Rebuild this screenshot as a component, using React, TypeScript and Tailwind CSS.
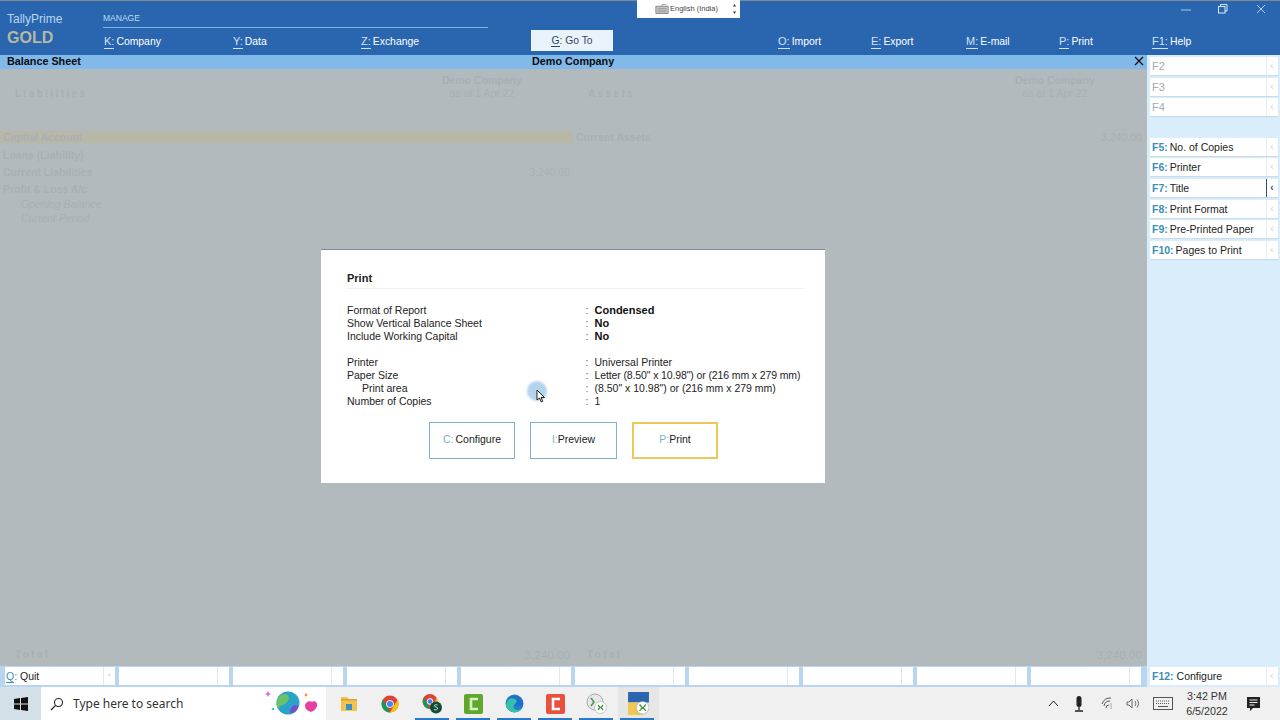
const F = "font-['Liberation_Sans',Arial,sans-serif]";

function Top({ k, t, w }: { k: string; t: string; w: string }) {
  return (
    <div className={`${w} shrink-0 pt-[6px] text-[10.4px] text-white leading-[14px]`}>
      <span className="text-[11px] text-[#cfe4f7] border-b border-[#cfe4f7] pb-[1px]">{k}:</span>
      <span className="ml-[2px]">{t}</span>
    </div>
  );
}

function Side({ k, t, active, dim }: { k: string; t?: string; active?: boolean; dim?: boolean }) {
  return (
    <div className="flex h-[18px] w-[128px] ml-[2.5px] bg-white shadow-[0_1px_1px_#c7dcec] mb-[2.6px]">
      <div className="flex-1 pl-[2.5px] text-[10.5px] leading-[18px] whitespace-nowrap">
        <span className={dim ? "text-[#a9a9a9] text-[11px]" : "text-[#3d8fb5] font-bold"}>{k}{t ? ":" : ""}</span>
        {t && <span className="ml-[2px] text-[#222]">{t}</span>}
      </div>
      <div className={`w-[12px] border-l text-center text-[10px] leading-[18px] ${active ? "border-[#2b4f78] text-[#2b4f78] font-bold" : "border-[#e8eef2] text-[#cfcfcf]"}`}>‹</div>
    </div>
  );
}

function BottomSlot({ label }: { label?: boolean }) {
  return (
    <div className="w-[110px] h-[18px] flex bg-white shrink-0">
      <div className="flex-1 pl-[1px] text-[10.5px] leading-[18px] text-[#222]">
        {label && <><span className="text-[#3d8fb5] border-b border-[#3d8fb5]">Q</span><span className="text-[#3d8fb5]">:</span> Quit</>}
      </div>
      <div className="w-[12px] border-l border-[#e4e8ea] text-[7px] leading-[18px] text-center text-[#bbb]">{label ? "^" : ""}</div>
    </div>
  );
}

function Row({ a, amt, it }: { a: string; amt?: string; it?: boolean }) {
  return (
    <div className={`flex justify-between ${it ? "h-[14px] pl-[21px] italic font-normal text-[10.5px]" : "h-[17.2px] pl-[3px] font-bold text-[10.5px]"} text-[#a9b0b3] pr-[3px] leading-[15px]`}>
      <span>{a}</span>
      {amt && <span className="font-normal text-[10.5px]">{amt}</span>}
    </div>
  );
}

function Line({ l, v, b, ind, tight }: { l: string; v: string; b?: boolean; ind?: boolean; tight?: boolean }) {
  return (
    <div className="flex leading-[13px] text-[10.5px] text-[#222] whitespace-nowrap">
      <div className={`w-[238.5px] shrink-0 ${ind ? "pl-[15px]" : ""}`}>{l}</div>
      <div className="w-[9px] shrink-0 text-[#666]">:</div>
      <div className={`${b ? "font-bold text-[#111] text-[11px]" : ""} ${tight ? "tracking-[-0.12px]" : ""}`}>{v}</div>
    </div>
  );
}

function Btn({ k, t, w, gold, gap }: { k: string; t: string; w: string; gold?: boolean; gap?: boolean }) {
  return (
    <div className={`${w} h-[37px] flex items-center justify-center text-[10.5px] text-[#222] border ${gold ? "border-[#eec75b] border-2" : "border-[#7db3cc]"}`}>
      <span className="text-[#7fb0c8]">{k}:</span><span className={gap ? "ml-[2px]" : ""}>{t}</span>
    </div>
  );
}

function Slot({ children, hi }: { children: React.ReactNode; hi?: boolean }) {
  return <div className={`w-[41.3px] h-full shrink-0 flex justify-center items-center ${hi ? "bg-[#e6e6e6]" : ""}`}>{children}</div>;
}

export default function App() {
  return (
    <div className={`${F} w-[1280px] h-[720px] overflow-hidden flex flex-col bg-[#f0f0f0]`}>
      {/* Title + menu */}
      <div className="h-[55px] shrink-0 bg-[#2a66b0] border-t border-[#7f8a93] relative flex">
        <div className="w-[103px] shrink-0 pl-[7px] pt-[11px]">
          <div className="text-[12px] leading-[14px] text-[#b9d6ef]">TallyPrime</div>
          <div className="text-[16px] leading-[18px] mt-[3px] font-bold text-[#b5b9a0]">GOLD</div>
        </div>
        <div className="flex-1 flex flex-col">
          <div className="w-[385px] h-[27px] border-b border-[#7fb5e6] pt-[11px] text-[8.5px] leading-[12px] text-[#bfdcf5]">MANAGE</div>
          <div className="flex items-start pl-[1px]">
            <Top k="K" t="Company" w="w-[129px]" />
            <Top k="Y" t="Data" w="w-[128px]" />
            <Top k="Z" t="Exchange" w="w-[170px]" />
            <div className="w-[82px] h-[21px] mt-[2px] bg-[#e9f3fb] text-[#33475b] text-center text-[10.3px] leading-[21px] shrink-0">
              <span className="border-b border-[#33475b]">G</span>: Go To
            </div>
            <div className="w-[165px] shrink-0" />
            <Top k="O" t="Import" w="w-[93px]" />
            <Top k="E" t="Export" w="w-[95px]" />
            <Top k="M" t="E-mail" w="w-[93px]" />
            <Top k="P" t="Print" w="w-[93px]" />
            <Top k="F1" t="Help" w="w-[60px]" />
          </div>
        </div>
        {/* Language bar */}
        <div className="absolute left-[637px] -top-[1px] w-[103px] h-[18px] bg-white flex items-center text-[7.5px] text-[#444]">
          <svg width="14" height="10" viewBox="0 0 12 9" className="ml-[18px] mr-[1px]"><rect x="0.5" y="2" width="11" height="6.5" fill="#c9c9c9" stroke="#777" strokeWidth="0.7" /><path d="M2 4h8M2 5.5h8M2 7h8" stroke="#888" strokeWidth="0.6" /><path d="M6 2V0.5h4" stroke="#777" fill="none" strokeWidth="0.6" /></svg>
          <span className="w-[62px] whitespace-nowrap">English (India)</span>
          <svg width="5" height="12" viewBox="0 0 5 12"><path d="M2.5 1 4 3.5H1zM2.5 11 4 8.5H1z" fill="#333" /></svg>
        </div>
        {/* Window controls */}
        <svg className="absolute left-[1181px] top-[8px]" width="11" height="2"><path d="M0 1h10" stroke="#a8c8e8" strokeWidth="1" /></svg>
        <svg className="absolute left-[1218px] top-[3px]" width="10" height="10" viewBox="0 0 10 10" fill="none" stroke="#d8e8f5"><rect x="0.5" y="2.5" width="6.5" height="6.5" /><path d="M2.5 2.5V0.5H9V7H7" /></svg>
        <svg className="absolute left-[1256px] top-[3px]" width="10" height="10" viewBox="0 0 10 10" stroke="#b5d0ea"><path d="M1 1l8 8M9 1l-8 8" /></svg>
      </div>

      {/* Body */}
      <div className="flex-1 flex min-h-0">
        <div className="w-[1147px] shrink-0 flex flex-col">
          <div className="h-[13.5px] shrink-0 bg-[#80b9ea] flex justify-between relative text-[10.8px] font-bold text-[#0c0c0c] leading-[12px] pl-[7px]">
            <span>Balance Sheet</span>
            <span className="absolute left-[532px] top-0">Demo Company</span>
            <svg className="absolute left-[1134px] top-[1px]" width="10" height="10" viewBox="0 0 10 10" stroke="#111" strokeWidth="1.3"><path d="M1 1l8 8M9 1l-8 8" /></svg>
          </div>
          <div className="flex-1 bg-[#b2babd] relative flex flex-col">
            <div className="flex flex-1 min-h-0">
              <div className="w-[573px] shrink-0 flex flex-col">
                <div className="h-[62px] flex justify-between">
                  <div className="pl-[15px] pt-[18px] text-[10px] leading-[14px] font-bold tracking-[2.4px] text-[#a9b0b3]">Liabilities</div>
                  <div className="pt-[5px] w-[100px] text-center text-[10.5px] leading-[13px] text-[#a9b0b3] mr-[41px]"><div className="font-bold">Demo Company</div><div>as at 1 Apr 22</div></div>
                </div>
                <div className="h-[12.5px] bg-[#b7b9a6] text-[#a9b0b3] text-[10.5px] font-bold pl-[3px] leading-[13px]">Capital Account</div>
                <div className="h-[4.5px]" />
                <Row a="Loans (Liability)" />
                <Row a="Current Liabilities" amt="3,240.00" />
                <Row a="Profit & Loss A/c" />
                <div className="-mt-[2px]">
                  <Row a="Opening Balance" it />
                  <Row a="Current Period" it />
                </div>
              </div>
              <div className="flex-1 flex flex-col">
                <div className="h-[62px] flex justify-between">
                  <div className="pl-[15px] pt-[18px] text-[10px] leading-[14px] font-bold tracking-[2.4px] text-[#a9b0b3]">Assets</div>
                  <div className="pt-[5px] w-[100px] text-center text-[10.5px] leading-[13px] text-[#a9b0b3] mr-[42px]"><div className="font-bold">Demo Company</div><div>as at 1 Apr 22</div></div>
                </div>
                <div className="flex justify-between pl-[3px] pr-[5px] text-[10.5px] font-bold text-[#a9b0b3] leading-[13px]"><span>Current Assets</span><span className="font-normal">3,240.00</span></div>
              </div>
            </div>
            <div className="h-[19px] pt-[1px] flex shrink-0 text-[#a9b0b3]">
              <div className="w-[573px] flex justify-between pl-[15px] pr-[3px] text-[10px] font-bold leading-[14px]"><span className="tracking-[2.4px]">Total</span><span className="font-normal text-[11.7px]">3,240.00</span></div>
              <div className="flex-1 flex justify-between pl-[14px] pr-[5px] text-[10px] font-bold leading-[14px]"><span className="tracking-[2.4px]">Total</span><span className="font-normal text-[11.7px]">3,240.00</span></div>
            </div>

            {/* Dialog */}
            <div className="absolute left-[321px] top-[180px] w-[504px] h-[234px] bg-white border-t border-[#7f8a93] pl-[26px] pr-[21px] pt-[21px]">
              <div className="text-[11px] leading-[14px] font-bold text-[#222] h-[18px] border-b border-[#f0f0f0]">Print</div>
              <div className="mt-[15px]">
                <Line l="Format of Report" v="Condensed" b />
                <Line l="Show Vertical Balance Sheet" v="No" b />
                <Line l="Include Working Capital" v="No" b />
                <div className="h-[13px]" />
                <Line l="Printer" v="Universal Printer" />
                <Line l="Paper Size" v={'Letter (8.50" x 10.98") or (216 mm x 279 mm)'} tight />
                <Line l="Print area" v={'(8.50" x 10.98") or (216 mm x 279 mm)'} ind />
                <Line l="Number of Copies" v="1" />
              </div>
              <div className="flex ml-[82px] mt-[14px]">
                <Btn k="C" t="Configure" w="w-[86px]" gap />
                <div className="w-[15px]" />
                <Btn k="I" t="Preview" w="w-[87px]" />
                <div className="w-[15px]" />
                <Btn k="P" t="Print" w="w-[86px]" gold />
              </div>
              {/* Cursor */}
              <div className="absolute left-[206px] top-[131px] w-[20px] h-[20px] rounded-full bg-[#b4d3ec] blur-[1px]" />
              <svg className="absolute left-[215px] top-[139px]" width="10" height="14" viewBox="0 0 10 14"><path d="M1 1v10l2.5-2 1.8 4 1.5-.7-1.8-3.8H8.5z" fill="#fff" stroke="#222" strokeWidth="1" /></svg>
            </div>
          </div>
        </div>
        {/* Right sidebar */}
        <div className="flex-1 bg-[#d9edfb] pt-[2px]">
          <Side k="F2" dim />
          <Side k="F3" dim />
          <Side k="F4" dim />
          <div className="h-[19px]" />
          <Side k="F5" t="No. of Copies" />
          <Side k="F6" t="Printer" />
          <Side k="F7" t="Title" active />
          <Side k="F8" t="Print Format" />
          <Side k="F9" t="Pre-Printed Paper" />
          <Side k="F10" t="Pages to Print" />
        </div>
      </div>

      {/* Bottom bar */}
      <div className="h-[21px] shrink-0 flex">
        <div className="w-[1147px] bg-[#b8d6ef] flex gap-[4px] pl-[5px] pt-[1px] shrink-0">
          <BottomSlot label />
          {Array.from({ length: 9 }).map((_, i) => (
            <BottomSlot key={i} />
          ))}
        </div>
        <div className="flex-1 bg-[#d9edfb] pl-[2.5px] pt-[1px]">
          <div className="h-[18px] w-[128px] flex bg-white text-[10.5px] leading-[18px]">
            <div className="flex-1 pl-[2.5px]"><span className="text-[#3d8fb5] font-bold">F12:</span><span className="ml-[3px] text-[#222]">Configure</span></div>
            <div className="w-[12px] border-l border-[#e8eef2] text-center text-[10px] text-[#cfcfcf]">‹</div>
          </div>
        </div>
      </div>

      {/* Taskbar */}
      <div className="h-[33px] shrink-0 flex items-center bg-[#f0f0f0] relative">
        <div className="w-[41px] h-full shrink-0 flex items-center justify-center bg-[#d5e1e9]">
          <svg width="14" height="14" viewBox="0 0 14 14" fill="#111"><path d="M0 2l6-1v5.5H0zM7 1l7-1v6.5H7zM0 7.5h6V13l-6-1zM7 7.5h7V14l-7-1z" /></svg>
        </div>
        <div className="w-[285px] h-full shrink-0 bg-white flex items-center relative">
          <svg className="ml-[9px]" width="14" height="14" viewBox="0 0 14 14" fill="none" stroke="#222" strokeWidth="1.1"><circle cx="8.5" cy="5.5" r="4" /><path d="M5.5 8.5 1 13" /></svg>
          <span className="ml-[9px] text-[12px] text-[#333] font-['Noto_Sans',sans-serif]">Type here to search</span>
          <svg className="absolute left-[220px] top-[1px]" width="62" height="30" viewBox="0 0 62 30">
            <circle cx="27" cy="15" r="11.5" fill="#2aa3c9" />
            <path d="M20 7c5-3 10 1 7 6s-8 3-10 8c-3-4-1-11 3-14z" fill="#6ac26a" />
            <path d="M31 19c3-3 6-2 6 0-1 4-5 6-8 6 0-2 0-4 2-6z" fill="#7b4bd0" />
            <path d="M51 14c2-2 6 0 5 4-1 3-3 5-6 6-3-1-6-3-6-6 0-4 5-6 7-4z" fill="#e83e9e" />
            <path d="M7 3l1 2 2 1-2 1-1 2-1-2-2-1 2-1z" fill="#d46be0" />
            <circle cx="12" cy="21" r="1.3" fill="#4cc" />
            <circle cx="45" cy="7" r="1.4" fill="#f0a030" />
          </svg>
        </div>
        <div className="flex items-center h-full pl-[2.5px]">
          <Slot><svg width="18" height="16" viewBox="0 0 18 16"><path d="M1 1h6l2 2h8v12H1z" fill="#f2c34e" /><rect x="6" y="8" width="6" height="6" fill="#3b8fc4" /><rect x="1" y="3" width="16" height="1.5" fill="#d9a032" /></svg></Slot>
          <Slot><svg width="18" height="18" viewBox="0 0 18 18"><circle cx="9" cy="9" r="8.5" fill="#db4437" /><path d="M2 4.5 6 11.5 9 17.5a8.5 8.5 0 0 1-7-13z" fill="#0f9d58" /><path d="M16.5 5a8.5 8.5 0 0 1-7.5 12.5l4-7z" fill="#f4c20d" /><circle cx="9" cy="9" r="3.8" fill="#fff" /><circle cx="9" cy="9" r="3" fill="#4285f4" /></svg></Slot>
          <Slot><svg width="22" height="21" viewBox="0 0 22 21"><circle cx="9" cy="8.5" r="7.5" fill="#db4437" /><path d="M3 4.5 9 16a7.5 7.5 0 0 1-6-11.5z" fill="#0f9d58" /><path d="M15.5 5a7.5 7.5 0 0 1-5 11z" fill="#f4c20d" /><circle cx="9" cy="8.5" r="2.8" fill="#4285f4" stroke="#fff" /><circle cx="15" cy="14.5" r="6" fill="#114d3a" /><path d="M13 16.5c2 1 4 0 3.5-1.5s-3-.8-3-2.2 2-1.5 3-.8" fill="none" stroke="#fff" strokeWidth=".8" /></svg></Slot>
          <Slot><svg width="19" height="20" viewBox="0 0 19 20"><rect width="19" height="20" rx="2" fill="#5fa82c" /><path d="M14 5H7v10h7" fill="none" stroke="#d9f0c4" strokeWidth="2.6" /></svg></Slot>
          <Slot><svg width="19" height="19" viewBox="0 0 18 18"><circle cx="9" cy="9" r="8.5" fill="#1d7fc4" /><path d="M1 10C2 4 8 2 13 4s4 7 2 8H8c0 3 4 4 8 2-2 3-6 4-9 3s-7-4-6-7z" fill="#35c1a8" /><path d="M3 5c3-4 10-4 13 0 2 3 1 7-1 7H8c1-3 4-4 3-6S5 3 3 5z" fill="#1f6fd0" /></svg></Slot>
          <Slot><svg width="19" height="20" viewBox="0 0 19 20"><rect width="19" height="20" rx="2" fill="#e9513c" /><path d="M14 5H7v10h7" fill="none" stroke="#fff" strokeWidth="2.6" /></svg></Slot>
          <Slot><svg width="21" height="21" viewBox="0 0 21 21"><circle cx="9" cy="9" r="8" fill="#e8e8e8" stroke="#aaa" /><path d="M5 5l3 4-3 4" fill="none" stroke="#3c9a40" strokeWidth="1.5" /><circle cx="14.5" cy="14.5" r="6" fill="#fff" stroke="#999" strokeWidth=".5" /><path d="M12 12l2 2.5-2 2.5M17 12l-2 2.5 2 2.5" fill="none" stroke="#3c9a40" strokeWidth="1.3" /></svg></Slot>
          <Slot hi><svg width="21" height="23" viewBox="0 0 20 22"><rect width="20" height="10" fill="#2a66b0" /><rect y="10" width="14" height="12" fill="#f0c850" /><circle cx="14" cy="15" r="6" fill="#fff" stroke="#999" strokeWidth="0.5" /><path d="M11 12l2.5 3-2.5 3M17 12l-2.5 3 2.5 3" fill="none" stroke="#3c9a40" strokeWidth="1.3" /></svg></Slot>
        </div>
        <div className="absolute top-[31px] left-[415px] flex">
          {[0, 1, 2, 3, 4, 5].map((i) => (
            <div key={i} className="w-[34px] h-[2px] bg-[#2a79c4] mr-[7px]" />
          ))}
        </div>
        <div className="flex-1" />
        <svg className="mr-[15.5px]" width="11" height="7" viewBox="0 0 11 7" fill="none" stroke="#222"><path d="M1 6l4.5-5L10 6" /></svg>
        <svg className="mr-[16.5px]" width="10" height="16" viewBox="0 0 10 16"><rect x="2.5" y="0" width="5" height="11" rx="2.5" fill="#222" /><path d="M5 11v3M1 15h8" stroke="#222" strokeWidth="1.3" /></svg>
        <svg className="mr-[12.5px]" width="13" height="13" viewBox="0 0 13 13" fill="none" stroke="#555"><path d="M1 7a9 9 0 0 1 9-6M3 9a6 6 0 0 1 6-5M5 11a3 3 0 0 1 3-3" /><path d="M10 6v6" stroke="#aaa" /></svg>
        <svg className="mr-[13px]" width="14" height="13" viewBox="0 0 14 13" fill="none" stroke="#666"><path d="M1 5h2l3-3v9L3 8H1z" /><path d="M9 4c1 1.5 1 3.5 0 5M11 2.5c2 2.5 2 5.5 0 8" /></svg>
        <svg className="mr-[7px]" width="20" height="13" viewBox="0 0 20 13" fill="none" stroke="#555"><rect x="0.5" y="0.5" width="19" height="12" /><path d="M3 4h14M3 6.5h14" strokeDasharray="1 1" /><path d="M5 9.5h10" /></svg>
        <div className="w-[54px] text-center text-[10.7px] leading-[15px] text-[#333] mr-[13px]"><div>3:42 PM</div><div>6/5/2022</div></div>
        <svg className="mr-[20px]" width="13" height="14" viewBox="0 0 13 14"><path d="M0 0h13v11H6l-3 3v-3H0z" fill="#222" /><path d="M2.5 3h8M2.5 5.5h8M2.5 8h5" stroke="#eee" /></svg>
      </div>
    </div>
  );
}
